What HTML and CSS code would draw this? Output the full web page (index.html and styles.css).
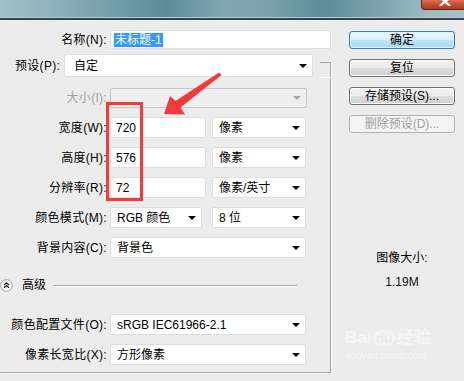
FILE: index.html
```html
<!DOCTYPE html>
<html lang="zh-CN">
<head>
<meta charset="utf-8">
<title>新建</title>
<link rel="stylesheet" href="styles.css">
</head>
<body>
<div class="titlebar">
  <div class="close"><svg width="14" height="6" viewBox="0 0 14 6"><path d="M2 -3 L7 2 L12 -3 M2 6 L7 1.5 L12 6" stroke="#fff" stroke-width="2.2" fill="none"/></svg></div>
</div>
<div class="dialog">
  <div class="main">
    <div class="row row-name">
      <span class="lbl">名称(N):</span>
      <div class="field w-name"><span class="hl">未标题-1</span></div>
    </div>
    <div class="row row-preset">
      <span class="lbl-preset">预设(P):</span>
      <div class="select w-preset"><span>自定</span><i class="caret"></i></div>
      <span class="frame-corner"></span>
    </div>
    <div class="group">
      <div class="row">
        <span class="lbl dis">大小(I):</span>
        <div class="select disabled w-size"><span></span><i class="caret"></i></div>
      </div>
      <div class="row">
        <span class="lbl">宽度(W):</span>
        <div class="field w-num">720</div>
        <div class="select w-unit"><span>像素</span><i class="caret"></i></div>
      </div>
      <div class="row">
        <span class="lbl">高度(H):</span>
        <div class="field w-num">576</div>
        <div class="select w-unit"><span>像素</span><i class="caret"></i></div>
      </div>
      <div class="row">
        <span class="lbl">分辨率(R):</span>
        <div class="field w-num">72</div>
        <div class="select w-unit"><span>像素/英寸</span><i class="caret"></i></div>
      </div>
      <div class="row">
        <span class="lbl">颜色模式(M):</span>
        <div class="select w-mode"><span>RGB 颜色</span><i class="caret"></i></div>
        <div class="select w-unit w-bits"><span>8 位</span><i class="caret"></i></div>
      </div>
      <div class="row">
        <span class="lbl">背景内容(C):</span>
        <div class="select w-wide"><span>背景色</span><i class="caret"></i></div>
      </div>
      <div class="adv">
        <svg class="adv-icon" width="13" height="13" viewBox="0 0 13 13"><circle cx="6.5" cy="6.5" r="5.8" fill="#fff" stroke="#9c9c9c"/><path d="M4 6 L6.5 3.8 L9 6 M4 8.8 L6.5 6.6 L9 8.8" stroke="#111" stroke-width="1.2" fill="none"/></svg>
        <span class="adv-text">高级</span>
        <span class="adv-line"></span>
      </div>
      <div class="row row-profile">
        <span class="lbl">颜色配置文件(O):</span>
        <div class="select w-wide"><span>sRGB IEC61966-2.1</span><i class="caret"></i></div>
      </div>
      <div class="row">
        <span class="lbl">像素长宽比(X):</span>
        <div class="select w-wide"><span>方形像素</span><i class="caret"></i></div>
      </div>
    </div>
  </div>
  <div class="side">
    <div class="btn default">确定</div>
    <div class="btn">复位</div>
    <div class="btn">存储预设(S)...</div>
    <div class="btn disabled">删除预设(D)...</div>
    <div class="info">
      <div>图像大小:</div>
      <div class="info-val">1.19M</div>
    </div>
  </div>
</div>

<div class="mark-box"></div>
<svg class="mark-arrow" width="70" height="55" viewBox="160 68 70 55">
  <polygon points="164,114 170,96 175.5,101 219,72.5 221.5,75 180.5,107.5 185,114.5" fill="#f43b3b"/>
</svg>

<div class="watermark">
  <div class="wm-logo">Bai<span class="wm-du">du</span>经验</div>
  <div class="wm-url">jingyan.baidu.com</div>
</div>
</body>
</html>
```

FILE: styles.css
```css
* { box-sizing: border-box; }

html, body {
  margin: 0;
  padding: 0;
}

body {
  width: 464px;
  height: 381px;
  overflow: hidden;
  position: relative;
  background: #ececec;
  font-family: "Liberation Sans", "Noto Sans CJK SC", sans-serif;
  font-size: 12px;
  line-height: 14px;
  color: #000;
}

.titlebar {
  height: 20px;
  display: flex;
  justify-content: flex-end;
  background: linear-gradient(90deg, #a3c0c8 0%, #8fb0ba 12%, #6c98a6 28%, #5f8b99 36%, #80a7b2 48%, #7aa1ad 58%, #5f8c9a 70%, #7ea4ae 82%, #9dbac2 92%, #a7c2c9 100%);
  border-bottom: 2px solid #34464c;
  box-shadow: inset 0 -1px 0 #b5cdd3;
}

.close {
  width: 44px;
  height: 10px;
  margin-right: -1px;
  background: linear-gradient(180deg, #d9735a 0%, #c5482d 60%, #b33a21 100%);
  border: 1px solid #4d2a22;
  border-top: 0;
  border-radius: 0 0 0 4px;
  display: flex;
  justify-content: center;
}

.close svg { margin-left: 4px; }

.dialog {
  display: flex;
  align-items: flex-start;
}

.main {
  width: 331px;
  flex: none;
  padding-top: 10px;
}

.row {
  display: flex;
  align-items: center;
  height: 21px;
}

.lbl {
  width: 107px;
  flex: none;
  text-align: right;
  white-space: nowrap;
  letter-spacing: 0.3px;
}

.lbl.dis { color: #a0a0a0; }

.field,
.select {
  height: 21px;
  background: #fff;
  border: 1px solid #dedede;
  border-radius: 2px;
  display: flex;
  align-items: center;
  white-space: nowrap;
}

.field {
  padding-left: 5px;
  margin-left: 3px;
}

.select {
  justify-content: space-between;
  padding: 0 5px 0 6px;
  margin-left: 3px;
}

.caret {
  width: 0;
  height: 0;
  border-left: 4px solid transparent;
  border-right: 4px solid transparent;
  border-top: 4px solid #000;
}

.select.disabled {
  background: #efefef;
  border-color: #c6c6c6;
}
.select.disabled .caret { border-top-color: #a8a8a8; }

.row-name { height: 19px; }
.w-name {
  width: 222px;
  height: 19px;
  padding-left: 3px;
}
.hl {
  background: #3399ff;
  color: #fff;
  padding: 0 1px;
  line-height: 14px;
}

.row-preset {
  margin-top: 5px;
  height: 23px;
  padding-left: 15px;
  align-items: stretch;
}
.lbl-preset {
  width: 46px;
  flex: none;
  display: flex;
  align-items: center;
  letter-spacing: 0.3px;
}
.w-preset {
  width: 249px;
  height: 23px;
  padding-left: 9px;
}
.frame-corner {
  width: 11px;
  height: 15px;
  flex: none;
  align-self: flex-end;
  margin-left: 7px;
  border-top: 1px solid #a2a2a2;
  border-right: 1px solid #a2a2a2;
  box-shadow: 1px 1px 0 #fff;
}

.group {
  width: 331px;
  border-right: 1px solid #a2a2a2;
  border-bottom: 1px solid #a2a2a2;
  box-shadow: 1px 1px 0 #fbfbfb;
  display: flex;
  flex-direction: column;
  gap: 9px;
  padding: 10px 0 7px;
}

.w-size { width: 197px; height: 20px; }
.w-num { width: 96px; }
.w-unit { width: 94px; margin-left: 6px; }
.w-mode { width: 92px; }
.w-bits { margin-left: 10px; }
.w-wide { width: 196px; }

.adv {
  display: flex;
  align-items: center;
  height: 14px;
  margin-top: 11px;
}
.adv-icon { flex: none; margin-left: 0; }
.adv-text { margin-left: 9px; }
.adv-line {
  flex: 1;
  height: 1px;
  margin: 0 33px 0 7px;
  background: #a9a9a9;
  box-shadow: 0 1px 0 #fff;
}
.row-profile { margin-top: 13px; }

.side {
  width: 106px;
  flex: none;
  margin-left: 18px;
  padding-top: 11px;
  display: flex;
  flex-direction: column;
  gap: 10px;
}

.btn {
  height: 18px;
  border: 1px solid #707070;
  border-radius: 3px;
  background: linear-gradient(180deg, #f3f3f3 0%, #ebebeb 48%, #dddddd 52%, #cfcfcf 100%);
  display: flex;
  align-items: center;
  justify-content: center;
  white-space: nowrap;
  box-shadow: inset 0 0 0 1px #fbfbfb;
}
.btn.default {
  border-color: #3c7fb1;
  background: linear-gradient(180deg, #eaf6fd 0%, #d9f0fc 48%, #bee6fd 52%, #a7d9f5 100%);
  box-shadow: inset 0 0 0 1px #ddf2ff;
}
.btn.disabled {
  border-color: #adb2b5;
  background: #f4f4f4;
  color: #a0a0a0;
  box-shadow: none;
}

.info {
  margin-top: 108px;
  text-align: center;
  display: flex;
  flex-direction: column;
  gap: 10px;
}
.info-val { color: #111; }

/* annotation overlays */
.mark-box {
  position: absolute;
  left: 106px;
  top: 102px;
  width: 37px;
  height: 99px;
  border: 3px solid #f23b3b;
}
.mark-arrow {
  position: absolute;
  left: 160px;
  top: 68px;
}

.watermark {
  position: absolute;
  left: 345px;
  top: 328px;
  color: rgba(255, 255, 255, 0.5);
  text-align: left;
}
.wm-logo {
  font-family: "Liberation Sans", "Noto Sans CJK SC", sans-serif;
  font-size: 17px;
  font-weight: bold;
  line-height: 20px;
}
.wm-du {
  display: inline-block;
  background: rgba(255, 255, 255, 0.45);
  color: #ececec;
  border-radius: 6px 6px 8px 8px;
  padding: 0 2px;
  margin: 0 2px;
  font-size: 14px;
  line-height: 16px;
}
.wm-url {
  font-size: 10px;
  line-height: 12px;
  margin-top: 2px;
  margin-left: 1px;
  color: rgba(255, 255, 255, 0.55);
}
```
